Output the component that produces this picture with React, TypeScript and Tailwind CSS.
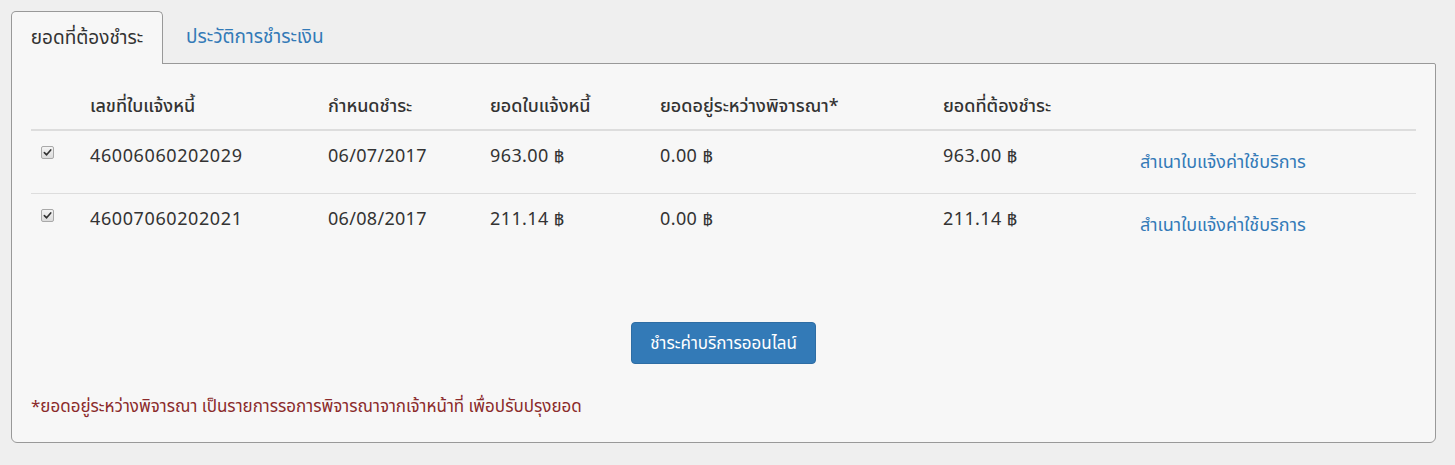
import React from 'react'

const rows = [
  { id: '46006060202029', due: '06/07/2017', amount: '963.00', pending: '0.00', total: '963.00' },
  { id: '46007060202021', due: '06/08/2017', amount: '211.14', pending: '0.00', total: '211.14' },
]

function CheckBox() {
  return (
    <span className="inline-flex h-[13px] w-[13px] items-center justify-center rounded-[2px] border border-[#a9a9a9] bg-gradient-to-b from-[#f4f4f4] to-[#dcdcdc]">
      <svg viewBox="0 0 10 10" className="h-[9px] w-[9px]">
        <path d="M1.5 5.2 L4 7.6 L8.6 2.2" fill="none" stroke="#333" strokeWidth="1.8" strokeLinecap="round" strokeLinejoin="round" />
      </svg>
    </span>
  )
}

export default function App() {
  return (
    <div
      className="min-h-[465px] w-full bg-[#efefef] pl-[11px] pr-[19px] pt-[10px] text-[18px] leading-[24px] text-[#333]"
      style={{ fontFamily: '"Noto Sans", "Noto Sans Thai", Lato, sans-serif' }}
    >
      {/* Tabs */}
      <div className="flex h-[53px] items-end text-[19px]">
        <div className="relative z-10 -mb-px flex h-[53px] w-[152px] items-center justify-center rounded-t-[5px] border border-b-0 border-[#999] bg-[#f7f7f7] pb-[2px] text-[#333]">
          ยอดที่ต้องชำระ
        </div>
        <div className="flex h-[53px] items-center pb-[2px] pl-[23px] text-[#337ab7]">ประวัติการชำระเงิน</div>
      </div>

      {/* Panel */}
      <div className="h-[380px] rounded-b-[6px] rounded-tr-[2px] border border-[#999] bg-[#f7f7f7] px-[19px] pt-[29px]">
        <table className="w-full border-collapse">
          <thead>
            <tr className="border-b-2 border-[#ddd] text-left">
              <th className="w-[59px] pb-[12px]" />
              <th className="w-[238px] pb-[12px] font-medium">เลขที่ใบแจ้งหนี้</th>
              <th className="w-[162px] pb-[12px] font-medium">กำหนดชำระ</th>
              <th className="w-[170px] pb-[12px] font-medium">ยอดใบแจ้งหนี้</th>
              <th className="w-[283px] pb-[12px] font-medium">ยอดอยู่ระหว่างพิจารณา*</th>
              <th className="w-[197px] pb-[12px] font-medium">ยอดที่ต้องชำระ</th>
              <th className="pb-[12px]" />
            </tr>
          </thead>
          <tbody>
            {rows.map((r, i) => (
              <tr key={r.id} className={i === 0 ? 'h-[63px] border-b border-[#ddd]' : 'h-[63px]'}>
                <td className="pl-[10px] pt-[7px] align-top">
                  <CheckBox />
                </td>
                <td className="pt-[12px] align-top tracking-[0.6px]">{r.id}</td>
                <td className="pt-[12px] align-top tracking-[0.3px]">{r.due}</td>
                <td className="pt-[12px] align-top tracking-[0.4px]">{r.amount} ฿</td>
                <td className="pt-[12px] align-top tracking-[0.4px]">{r.pending} ฿</td>
                <td className="pt-[12px] align-top tracking-[0.4px]">{r.total} ฿</td>
                <td className="pt-[18px] align-top text-[#337ab7]">สำเนาใบแจ้งค่าใช้บริการ</td>
              </tr>
            ))}
          </tbody>
        </table>

        <div className="mt-[66px] flex justify-center">
          <button className="h-[42px] w-[185px] rounded-[4px] border border-[#2e6da4] bg-[#337ab7] text-[17px] text-white">
            ชำระค่าบริการออนไลน์
          </button>
        </div>

        <p className="mt-[30px] text-[17px] text-[#8b2b2b]">
          *ยอดอยู่ระหว่างพิจารณา เป็นรายการรอการพิจารณาจากเจ้าหน้าที่ เพื่อปรับปรุงยอด
        </p>
      </div>
    </div>
  )
}
